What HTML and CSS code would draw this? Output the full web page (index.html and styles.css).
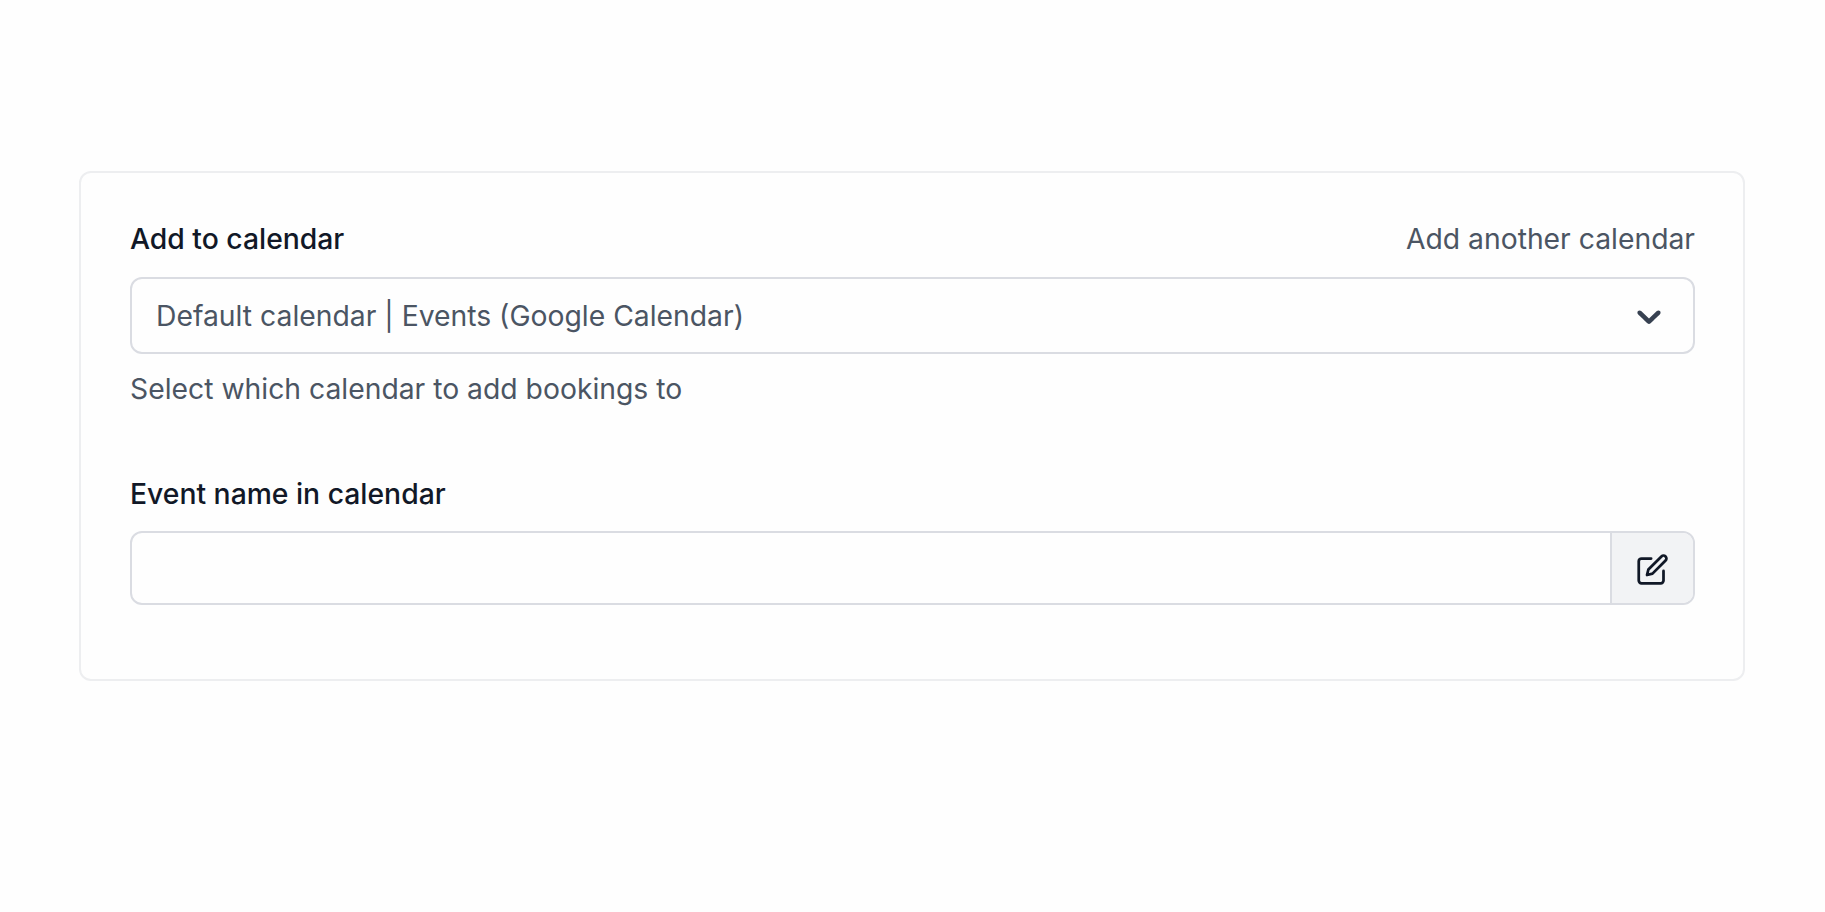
FILE: index.html
```html
<!DOCTYPE html>
<html lang="en">
<head>
    <meta charset="UTF-8">
    <meta name="viewport" content="width=device-width, initial-scale=1.0">
    <title>Calendar settings</title>
    <link rel="stylesheet" href="styles.css">
</head>
<body>
    <main class="card">
        <section class="field">
            <div class="field-header">
                <span class="label">Add to calendar</span>
                <a class="link">Add another calendar</a>
            </div>
            <div class="select">
                <span class="select-value">Default calendar | Events (Google Calendar)</span>
                <svg class="chevron" viewBox="0 0 20 20" fill="currentColor">
                    <path d="M4.516 7.548c0.436-0.446 1.043-0.481 1.576 0l3.908 3.747 3.908-3.747c0.533-0.481 1.141-0.446 1.574 0 0.436 0.445 0.408 1.197 0 1.615-0.406 0.418-4.695 4.502-4.695 4.502-0.217 0.223-0.502 0.335-0.787 0.335s-0.57-0.112-0.789-0.335c0 0-4.287-4.084-4.695-4.502s-0.436-1.17 0-1.615z"/>
                </svg>
            </div>
            <p class="hint">Select which calendar to add bookings to</p>
        </section>

        <section class="field">
            <label class="label" for="eventName">Event name in calendar</label>
            <div class="input-group">
                <input type="text" id="eventName" class="input">
                <button type="button" class="addon" aria-label="Edit">
                    <svg class="edit-icon" viewBox="0 0 24 24" fill="none" stroke="currentColor" stroke-width="2" stroke-linecap="round" stroke-linejoin="round">
                        <path d="M11 4H4a2 2 0 0 0-2 2v14a2 2 0 0 0 2 2h14a2 2 0 0 0 2-2v-7"/>
                        <path d="M18.5 2.5a2.121 2.121 0 0 1 3 3L12 15l-4 1 1-4 9.5-9.5z"/>
                    </svg>
                </button>
            </div>
        </section>
    </main>
</body>
</html>
```
FILE: styles.css
```css
* { box-sizing: border-box; }
body {
    margin: 0;
    padding: 171px 80px 0 79px;
    background: #fefefe;
    font-family: Inter, "Liberation Sans", sans-serif;
    font-size: 28.3px;
    line-height: 40px;
    color: #374151;
}
.card {
    height: 510px;
    padding: 46px 48px 0 49px;
    border: 2px solid #edeef0;
    border-radius: 12px;
}
.field { margin-bottom: 65px; }
.field-header { display: flex; justify-content: space-between; }
.label { display: block; font-weight: 500; color: #111827; }
.link { color: #4b5563; }
.select {
    display: flex;
    align-items: center;
    justify-content: space-between;
    height: 77px;
    margin-top: 18px;
    padding: 0 24px 0 24px;
    border: 2px solid #dadce2;
    border-radius: 12px;
    color: #4b5563;
}
.chevron { width: 40px; height: 40px; color: #374151; }
.hint { margin: 15px 0 0; color: #4b5563; }
.input-group {
    display: flex;
    height: 74px;
    margin-top: 17px;
    border: 2px solid #dadce2;
    border-radius: 12px;
    overflow: hidden;
}
.input { flex: 1; border: none; padding: 0 24px; background: transparent; font: inherit; outline: none; }
.addon {
    display: flex;
    align-items: center;
    justify-content: center;
    width: 83px;
    padding: 2px 0 0;
    border: none;
    border-left: 2px solid #dadce2;
    background: #f2f3f5;
    color: #111827;
}
.edit-icon { width: 33px; height: 33px; }
```
